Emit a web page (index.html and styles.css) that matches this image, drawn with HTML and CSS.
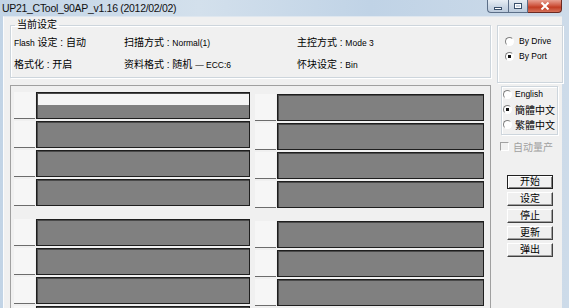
FILE: index.html
```html
<!DOCTYPE html>
<html lang="zh-CN">
<head>
    <meta charset="UTF-8">
    <title>UP21_CTool_90AP_v1.16 (2012/02/02)</title>
    <link rel="stylesheet" href="styles.css">
</head>
<body>
    <div class="window">
        <div class="titlebar">
            <span class="title">UP21_CTool_90AP_v1.16 (2012/02/02)</span>
            <div class="caption">
                <span class="cap cap-min"><i></i></span>
                <span class="cap cap-max"><i></i></span>
                <span class="cap cap-close">
                    <svg width="10" height="8" viewBox="0 0 10 8"><path d="M1.5 0.5 L8.5 7.5 M8.5 0.5 L1.5 7.5" stroke="#fff" stroke-width="2"/></svg>
                </span>
            </div>
        </div>

        <div class="client">
            <fieldset class="group settings">
                <legend>当前设定</legend>
                <div class="settings-grid">
                    <span><span class="en">Flash</span> 设定 : 自动</span>
                    <span>扫描方式 : <span class="en">Normal(1)</span></span>
                    <span>主控方式 : <span class="en">Mode 3</span></span>
                    <span>格式化 : 开启</span>
                    <span>资料格式 : 随机 <span class="en">— ECC:6</span></span>
                    <span>怀块设定 : <span class="en">Bin</span></span>
                </div>
            </fieldset>

            <fieldset class="group mode">
                <label class="opt"><span class="radio"></span><span class="en-lg">By Drive</span></label>
                <label class="opt"><span class="radio checked"></span><span class="en-lg">By Port</span></label>
            </fieldset>

            <div class="ports">
                <div class="port-col">
                    <div class="port-group">
                        <div class="port"><span class="port-cell"></span><span class="bar bar-first"></span></div>
                        <div class="port"><span class="port-cell"></span><span class="bar"></span></div>
                        <div class="port"><span class="port-cell"></span><span class="bar"></span></div>
                        <div class="port"><span class="port-cell"></span><span class="bar"></span></div>
                    </div>
                    <div class="port-group">
                        <div class="port"><span class="port-cell"></span><span class="bar"></span></div>
                        <div class="port"><span class="port-cell"></span><span class="bar"></span></div>
                        <div class="port"><span class="port-cell"></span><span class="bar"></span></div>
                        <div class="port"><span class="port-cell"></span><span class="bar"></span></div>
                    </div>
                </div>
                <div class="port-col port-col-right">
                    <div class="port-group">
                        <div class="port"><span class="port-cell"></span><span class="bar"></span></div>
                        <div class="port"><span class="port-cell"></span><span class="bar"></span></div>
                        <div class="port"><span class="port-cell"></span><span class="bar"></span></div>
                        <div class="port"><span class="port-cell"></span><span class="bar"></span></div>
                    </div>
                    <div class="port-group">
                        <div class="port"><span class="port-cell"></span><span class="bar"></span></div>
                        <div class="port"><span class="port-cell"></span><span class="bar"></span></div>
                        <div class="port"><span class="port-cell"></span><span class="bar"></span></div>
                        <div class="port"><span class="port-cell"></span><span class="bar"></span></div>
                    </div>
                </div>
            </div>

            <div class="side">
                <div class="lang">
                    <label class="opt"><span class="radio"></span><span class="en-lg">English</span></label>
                    <label class="opt"><span class="radio checked"></span>簡體中文</label>
                    <label class="opt"><span class="radio"></span>繁體中文</label>
                </div>
                <label class="check"><span class="box"></span>自动量产</label>
                <div class="actions">
                    <button class="btn btn-default">开始</button>
                    <button class="btn">设定</button>
                    <button class="btn">停止</button>
                    <button class="btn">更新</button>
                    <button class="btn">弹出</button>
                </div>
            </div>
        </div>
    </div>
</body>
</html>
```

FILE: styles.css
```css
* {
    box-sizing: border-box;
}
body {
    margin: 0;
    background: #c6d7e8;
    font-family: "Liberation Sans", "Noto Sans CJK SC", sans-serif;
    font-size: 10px;
    color: #000;
}
.window {
    width: 569px;
    height: 308px;
    overflow: hidden;
    display: flex;
    flex-direction: column;
    background: linear-gradient(90deg, #c2d4e6, #d3e0ec 35%, #c0d3e6 65%, #cddbe9);
}
.titlebar {
    height: 18px;
    display: flex;
    justify-content: space-between;
    align-items: flex-start;
    padding-left: 2px;
}
.title {
    font-size: 10.5px;
    letter-spacing: -0.3px;
    line-height: 16px;
    color: #111;
}
.caption {
    display: flex;
    margin-right: 7px;
}
.cap {
    height: 13px;
    border: 1px solid #5c6f88;
    border-top: none;
    display: flex;
    align-items: center;
    justify-content: center;
    background: linear-gradient(#e8eef5, #cdd9e6 50%, #bccbdc);
}
.cap-min {
    width: 21px;
    border-right: none;
    border-radius: 0 0 0 4px;
}
.cap-min i {
    width: 8px;
    height: 3px;
    margin-top: 4px;
    background: #fff;
    border: 1px solid #39506b;
}
.cap-max {
    width: 20px;
}
.cap-max i {
    width: 8px;
    height: 6px;
    border: 1px solid #39506b;
    box-shadow: inset 0 0 0 1px #fff;
    background: #c9d5e3;
}
.cap-close {
    width: 34px;
    border-left: none;
    border-color: #6b2a22;
    border-radius: 0 0 4px 0;
    background: linear-gradient(#e8a193, #d05a44 45%, #c23d24 60%, #d5725a);
}

.client {
    flex: 1;
    margin: 0 7px 0 3px;
    background: #f0f0f0;
    border-top: 1px solid #dfe7ef;
    border-left: 1px solid #fbfcfd;
    padding: 1px 0 0 6px;
    display: grid;
    grid-template-columns: 481px 66px;
    grid-template-rows: auto 1fr;
    column-gap: 6px;
    align-items: start;
}
.group {
    margin: 0;
    min-width: 0;
    border: 1px solid #cdd5dc;
    box-shadow: inset 1px 1px #fff, 1px 1px #fff;
}
.settings {
    padding: 1px 4px 6px 3px;
}
.settings legend {
    padding: 0 2px;
    margin-left: 1px;
    line-height: 14px;
}
.settings-grid {
    display: grid;
    grid-template-columns: 110px 173px auto;
    grid-auto-rows: 16px;
    row-gap: 6px;
    align-items: center;
    white-space: nowrap;
}
.en {
    font-size: 8.5px;
}
.en-lg {
    font-size: 8.5px;
}
.mode {
    margin-top: 7px;
    height: 58px;
    padding: 8px 0 0 7px;
    display: flex;
    flex-direction: column;
    gap: 1px;
}
.opt {
    display: flex;
    align-items: center;
    gap: 5px;
    height: 14px;
    white-space: nowrap;
}
.radio {
    width: 9px;
    height: 9px;
    border-radius: 50%;
    border: 1px solid;
    border-color: #808080 #fff #fff #808080;
    background: #fff;
    flex: none;
}
.radio.checked {
    background: radial-gradient(circle, #111 0 1.6px, #fff 2px);
}

.ports {
    margin-top: 2px;
    border: 1px solid #a0a0a0;
    border-bottom: none;
    padding: 6px 6px 0 3px;
    display: grid;
    grid-template-columns: 236px 229px;
    column-gap: 5px;
    height: 230px;
}
.port-col {
    display: flex;
    flex-direction: column;
    gap: 13px;
}
.port-col-right {
    padding-top: 2px;
}
.port-group {
    display: flex;
    flex-direction: column;
    gap: 2px;
}
.port {
    display: flex;
    height: 27px;
}
.port-cell {
    width: 21px;
    margin-right: 1px;
    background: #f6f6f6;
    border-bottom: 1px solid #6c6c6c;
    flex: none;
}
.bar {
    flex: 1;
    border: 1px solid #1e1e1e;
    box-shadow: inset 1px 1px #4a4a4a;
    background: #808080;
}
.bar-first {
    background: linear-gradient(#f4f4f4 0 12px, #808080 12px);
}

.side {
    display: flex;
    flex-direction: column;
    align-items: flex-start;
}
.lang {
    margin: 3px 0 0 4px;
    width: 57px;
    height: 49px;
    border: 1px solid #cdd5dc;
    box-shadow: inset 1px 1px #fff, 1px 1px #fff;
    padding-left: 1px;
    display: flex;
    flex-direction: column;
    gap: 1px;
}
.lang .opt {
    gap: 3px;
}
.check {
    margin: 4px 0 0 3px;
    height: 14px;
    display: flex;
    align-items: center;
    gap: 4px;
    color: #a0a0a0;
    white-space: nowrap;
}
.box {
    width: 9px;
    height: 9px;
    border: 1px solid;
    border-color: #a0a0a0 #fff #fff #a0a0a0;
    background: #f0f0f0;
}
.actions {
    margin: 22px 0 0 10px;
    display: flex;
    flex-direction: column;
    gap: 3px;
}
.btn {
    width: 46px;
    height: 14px;
    padding: 0;
    font-family: inherit;
    font-size: 10px;
    line-height: 12px;
    background: #f0f0f0;
    border: 1px solid;
    border-color: #fff #404040 #404040 #fff;
    box-shadow: inset -1px -1px #a0a0a0;
}
.btn-default {
    border-color: #202020;
    box-shadow: inset 1px 1px #fff, inset -1px -1px #808080;
}
```
